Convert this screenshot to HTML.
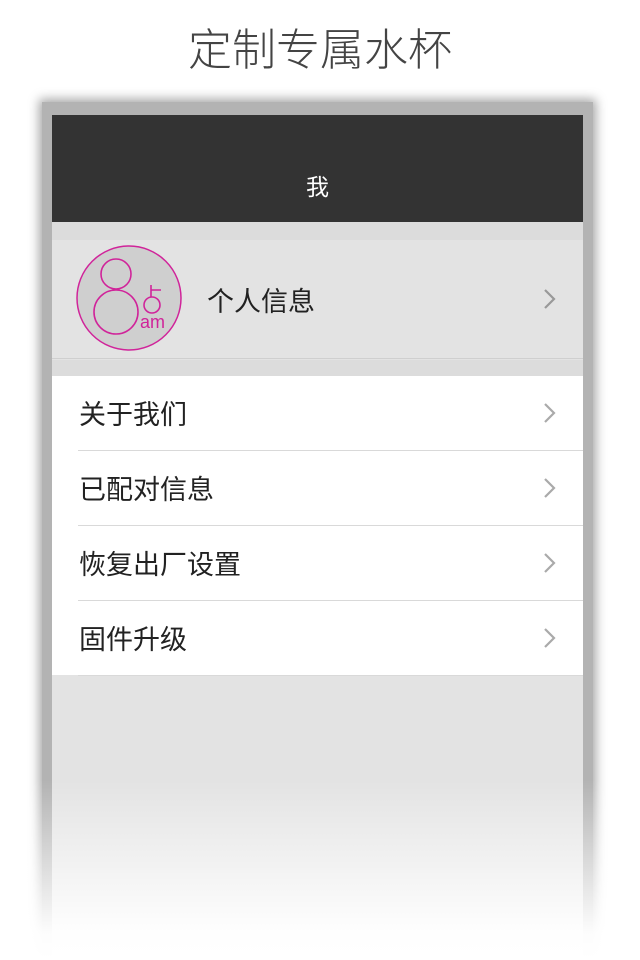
<!DOCTYPE html>
<html style="overflow:hidden;height:960px"><head><meta charset="utf-8"><style>
*{margin:0;padding:0;box-sizing:border-box}
body{width:640px;height:960px;background:#fff;position:relative;overflow:hidden;font-family:"Liberation Sans","Noto Sans CJK SC",sans-serif}
.title{position:absolute;top:14px;left:0;width:640px;text-align:center;font-size:44px;font-weight:300;color:#444;letter-spacing:0}
.bezel{position:absolute;left:42px;top:102px;width:551px;height:858px;background:#b3b3b3;box-shadow:0 0 10px 3px rgba(0,0,0,.35)}
.screen{position:absolute;left:52px;top:115px;width:531px;height:845px;background:#e3e3e3}
.hdr{position:absolute;left:0;top:0;width:531px;height:107px;background:#333;color:#fff;font-size:23px;text-align:center;line-height:144px}
.band{position:absolute;left:0;top:107px;width:531px;height:18px;background:#dcdcdc}
.prof{position:absolute;left:0;top:125px;width:531px;height:119px;background:#e3e3e3;border-bottom:1px solid #cfcfcf}
.band2{position:absolute;left:0;top:245px;width:531px;height:16px;background:#dcdcdc}
.list{position:absolute;left:0;top:261px;width:531px;height:299px;background:#fff}
.row{position:absolute;left:0;width:531px;height:75px}
.row span{position:absolute;left:27px;top:17px;font-size:27px;color:#222}
.row i{position:absolute;left:26px;right:0;bottom:0;height:1px;background:#d9d9d9}
.chev{position:absolute;right:26px;width:14px;height:22px}
.fade{position:absolute;left:0;top:780px;width:640px;height:180px;background:linear-gradient(rgba(255,255,255,0),rgba(255,255,255,.97) 85%,#fff)}
</style></head><body>
<div class="title">定制专属水杯</div>
<div class="bezel"></div>
<div class="screen">
 <div class="hdr">我</div>
 <div class="band"></div>
 <div class="prof">
  <svg style="position:absolute;left:24px;top:5px" width="106" height="106" viewBox="0 0 106 106">
   <circle cx="53" cy="53" r="52" fill="#cfcfcf" stroke="#d0249a" stroke-width="1.5"/>
   <g fill="none" stroke="#d0249a" stroke-width="1.6">
    <circle cx="40" cy="29" r="15"/><circle cx="40" cy="67" r="22"/>
    <circle cx="76" cy="60" r="8"/><path d="M75 52V40M75 45h10"/>
   </g>
   <text x="64" y="83" font-size="18" fill="#d0249a" font-family="Liberation Sans,sans-serif">am</text>
  </svg>
  <span style="position:absolute;left:155px;top:40px;font-size:27px;color:#222">个人信息</span>
  <svg class="chev" style="top:48px" viewBox="0 0 14 22"><path d="M2 2l9 9-9 9" fill="none" stroke="#999" stroke-width="2.2"/></svg>
 </div>
 <div class="band2"></div>
 <div class="list">
  <div class="row" style="top:0"><span>关于我们</span><svg class="chev" style="top:26px" viewBox="0 0 14 22"><path d="M2 2l9 9-9 9" fill="none" stroke="#aaa" stroke-width="2.2"/></svg><i></i></div>
  <div class="row" style="top:75px"><span>已配对信息</span><svg class="chev" style="top:26px" viewBox="0 0 14 22"><path d="M2 2l9 9-9 9" fill="none" stroke="#aaa" stroke-width="2.2"/></svg><i></i></div>
  <div class="row" style="top:150px"><span>恢复出厂设置</span><svg class="chev" style="top:26px" viewBox="0 0 14 22"><path d="M2 2l9 9-9 9" fill="none" stroke="#aaa" stroke-width="2.2"/></svg><i></i></div>
  <div class="row" style="top:225px"><span>固件升级</span><svg class="chev" style="top:26px" viewBox="0 0 14 22"><path d="M2 2l9 9-9 9" fill="none" stroke="#aaa" stroke-width="2.2"/></svg><i></i></div>
 </div>
</div>
<div class="fade"></div>
</body></html>
